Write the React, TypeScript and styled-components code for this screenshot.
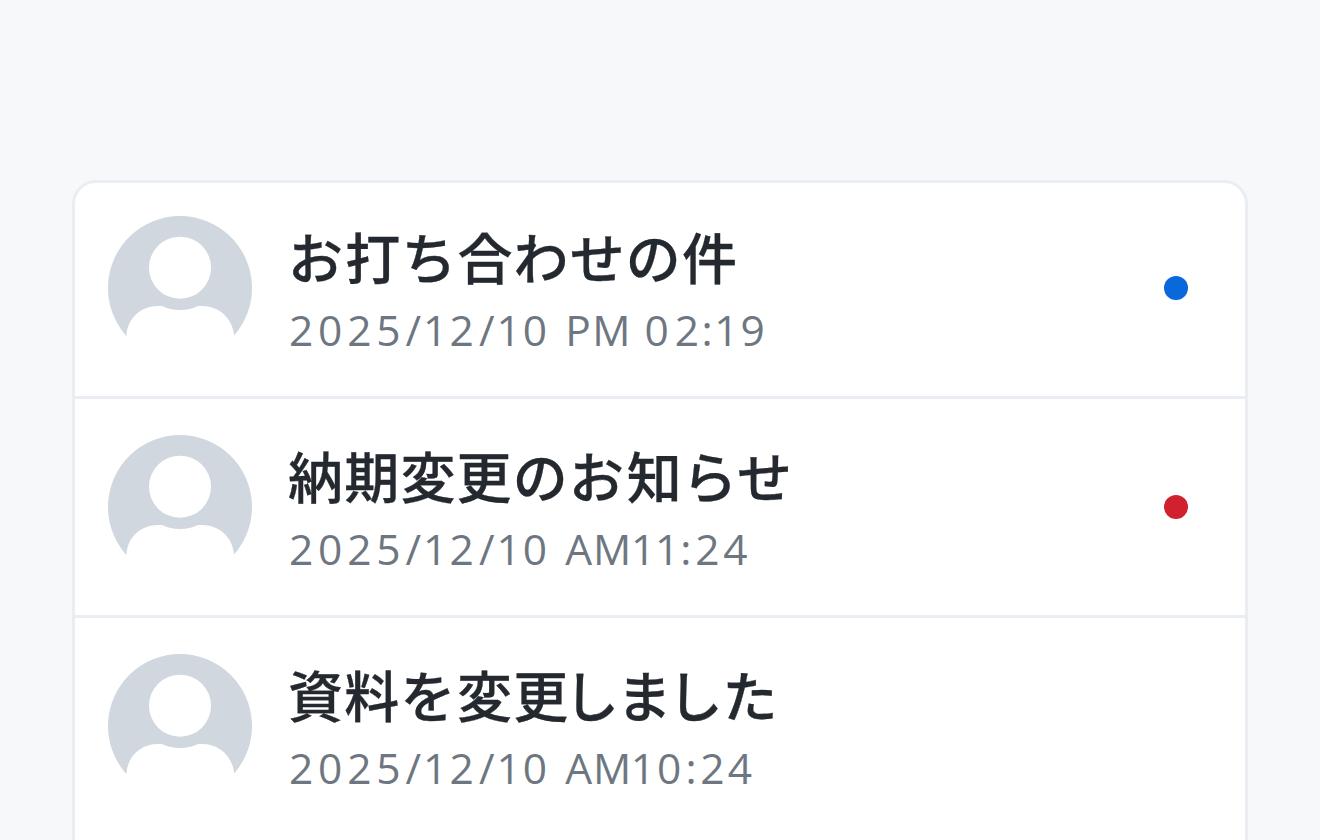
import React from 'react';
import styled, { createGlobalStyle } from 'styled-components';

type Status = 'unread' | 'urgent';

// [text, letter spacing in px]
type Run = [string, number];

type Message = {
  title: Run[];
  date: Run[];
  status?: Status;
};

const statusColours: Record<Status, string> = {
  unread: '#0969da',
  urgent: '#cf222e',
};

const day: Run[] = [
  ['2025', 5],
  ['/1', 2.3],
  ['2', 5.3],
  ['/1', 2.2],
  ['0 ', 3.8],
];

const messages: Message[] = [
  {
    title: [
      ['お', 2.5],
      ['打ち合わせの件', 1.3],
    ],
    date: [...day, ['PM ', 1.6], ['0', 6.2], ['2', 2.6], [':1', 2], ['9', 0]],
    status: 'unread',
  },
  {
    title: [
      ['納期変更の', 1.4],
      ['お', 3],
      ['知', 0.6],
      ['らせ', 1],
    ],
    date: [...day, ['A', 1], ['M1', -0.1], ['1', 1.2], [':2', 4], ['4', 0]],
    status: 'urgent',
  },
  {
    title: [
      ['資料を変', 1.5],
      ['更', -4],
      ['し', -2],
      ['ま', -4],
      ['し', 0],
      ['た', 0],
    ],
    date: [...day, ['A', 1], ['M', -0.2], ['1', 2], ['0', 4.5], [':2', 3.6], ['4', 0]],
  },
];

const GlobalStyle = createGlobalStyle`
  * {
    box-sizing: border-box;
  }
  body {
    margin: 0;
    background: #f6f8fa;
    overflow: hidden;
  }
`;

const Page = styled.main`
  height: 840px;
  padding: 180px 72px 0;
  overflow: hidden;
`;

const List = styled.ul`
  height: 700px;
  margin: 0;
  padding: 0;
  list-style: none;
  background: #ffffff;
  border: 3px solid #eaeef2;
  border-radius: 24px;
`;

const Item = styled.li`
  display: flex;
  align-items: center;
  gap: 36px;
  height: 219px;
  padding: 0 57px 0 33px;
  border-bottom: 3px solid #eaeef2;

  &:first-child {
    height: 216px;
    padding-bottom: 3px;
  }
  &:last-child {
    border-bottom-color: transparent;
  }
`;

const AvatarIcon = styled.svg`
  flex: none;
  width: 144px;
  height: 144px;
  fill: #d0d7de;
`;

const Body = styled.div`
  flex: 1;
  white-space: nowrap;
`;

const Title = styled.div`
  height: 76px;
  padding-top: 1px;
  font: 500 55px/76px 'Noto Sans CJK JP', sans-serif;
  color: #24292f;
  -webkit-text-stroke: 0.3px #24292f;
`;

const DateText = styled.div`
  height: 60px;
  margin-top: 8px;
  padding-left: 1px;
  font: 400 42.5px/60px 'Open Sans', 'Noto Sans CJK JP', sans-serif;
  color: #6e7781;
`;

const Spaced = styled.span<{ $spacing: number }>`
  letter-spacing: ${({ $spacing }) => $spacing - 0.2}px;
`;

const Dot = styled.span<{ $status: Status }>`
  flex: none;
  width: 24px;
  height: 24px;
  border-radius: 50%;
  background: ${({ $status }) => statusColours[$status]};
`;

const Avatar = () => (
  <AvatarIcon viewBox="0 0 144 144">
    <path
      fillRule="evenodd"
      d="M17.8 119.4A72 72 0 1 1 126.2 119.4C124.5 102 111 90 94 90H90Q82 94 72 94Q62 94 54 90H50C33 90 19.5 102 18.5 119.4ZM72 20.7A31 31 0 1 0 72 82.7A31 31 0 1 0 72 20.7Z"
    />
  </AvatarIcon>
);

const Runs = ({ runs }: { runs: Run[] }) => (
  <>
    {runs.map(([text, spacing], i) => (
      <Spaced key={i} $spacing={spacing}>
        {text}
      </Spaced>
    ))}
  </>
);

const App = () => (
  <>
    <GlobalStyle />
    <Page>
      <List>
        {messages.map((message, i) => (
          <Item key={i}>
            <Avatar />
            <Body>
              <Title>
                <Runs runs={message.title} />
              </Title>
              <DateText>
                <Runs runs={message.date} />
              </DateText>
            </Body>
            {message.status && <Dot $status={message.status} />}
          </Item>
        ))}
      </List>
    </Page>
  </>
);

export default App;
